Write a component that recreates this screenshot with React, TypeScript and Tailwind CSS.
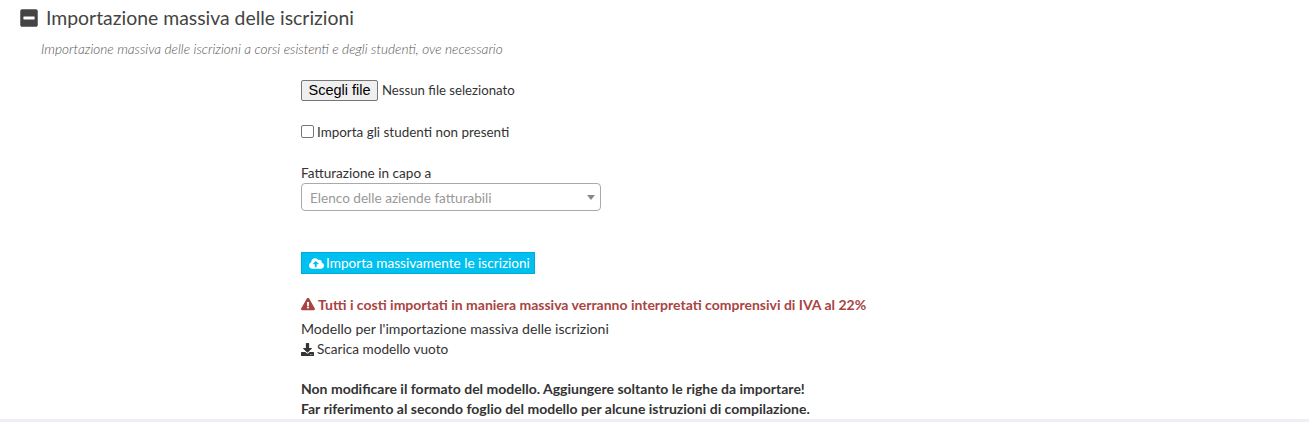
import React from "react";
import { FaMinusSquare, FaCloudUploadAlt, FaExclamationTriangle, FaDownload } from "react-icons/fa";

const font = { fontFamily: '"Lato", "Noto Sans", sans-serif' };

export default function App() {
  return (
    <div className="h-[422px] w-[1309px] overflow-hidden bg-white flex flex-col text-[#333] text-[13.6px]" style={font}>
      <div className="h-[419px] overflow-hidden">
        <div className="flex items-center pl-[20px] pt-[5px] h-[31px]">
          <FaMinusSquare className="text-[#444] text-[20px] w-[18px]" />
          <span className="ml-[8px] text-[19.4px] leading-[24px] text-[#444]">Importazione massiva delle iscrizioni</span>
        </div>
        <p className="pl-[41px] mt-[8px] text-[13.65px] leading-[20px] italic font-light text-[#555]">
          Importazione massiva delle iscrizioni a corsi esistenti e degli studenti, ove necessario
        </p>
        <div className="pl-[301px]">
          <div className="flex items-center mt-[20px] h-[22px]">
            <button className="h-[21px] w-[77px] rounded-[2px] border border-[#767676] bg-[#efefef] text-[14.5px] leading-none text-black" style={{ fontFamily: '"Liberation Sans", sans-serif' }}>
              Scegli file
            </button>
            <span className="ml-[4px] text-[13.2px] leading-[20px]">Nessun file selezionato</span>
          </div>
          <label className="flex items-center mt-[21px] h-[20px]">
            <input type="checkbox" className="m-0 mb-[2px] w-[13px] h-[13px] appearance-none rounded-[2px] border border-[#767676] bg-white" />
            <span className="ml-[3px] text-[13.44px]">Importa gli studenti non presenti</span>
          </label>
          <div className="mt-[21px] h-[20px] leading-[20px]">Fatturazione in capo a</div>
          <div className="flex h-[28px] w-[300px] items-center justify-between rounded-[4px] border border-[#aaa] bg-white pl-[8px] pr-[5px] pt-[2px] text-[#999]">
            <span>Elenco delle aziende fatturabili</span>
            <span className="mb-[2px] h-0 w-0 border-x-[4px] border-t-[5px] border-x-transparent border-t-[#888]" />
          </div>
          <button className="mt-[41px] flex h-[22px] items-center bg-[#00c0ef] border border-[#00acd6] pl-[7px] pr-[4px] text-white">
            <FaCloudUploadAlt className="text-[15px]" />
            <span className="ml-[2px]">Importa massivamente le iscrizioni</span>
          </button>
          <div className="mt-[20px] flex items-center h-[20px] text-[14px] font-bold text-[#a94442]">
            <FaExclamationTriangle className="text-[14px]" />
            <span className="ml-[3px]">Tutti i costi importati in maniera massiva verranno interpretati comprensivi di IVA al 22%</span>
          </div>
          <div className="mt-[5px] text-[14.1px] leading-[20px]">Modello per l'importazione massiva delle iscrizioni</div>
          <div className="flex items-center h-[20px]">
            <FaDownload className="text-[13px]" />
            <span className="ml-[3px]">Scarica modello vuoto</span>
          </div>
          <div className="mt-[20px] text-[14px] font-bold leading-[20px]">
            Non modificare il formato del modello. Aggiungere soltanto le righe da importare!
            <br />
            Far riferimento al secondo foglio del modello per alcune istruzioni di compilazione.
          </div>
        </div>
      </div>
      <div className="h-[3px] bg-[#ecf0f5]" />
    </div>
  );
}
